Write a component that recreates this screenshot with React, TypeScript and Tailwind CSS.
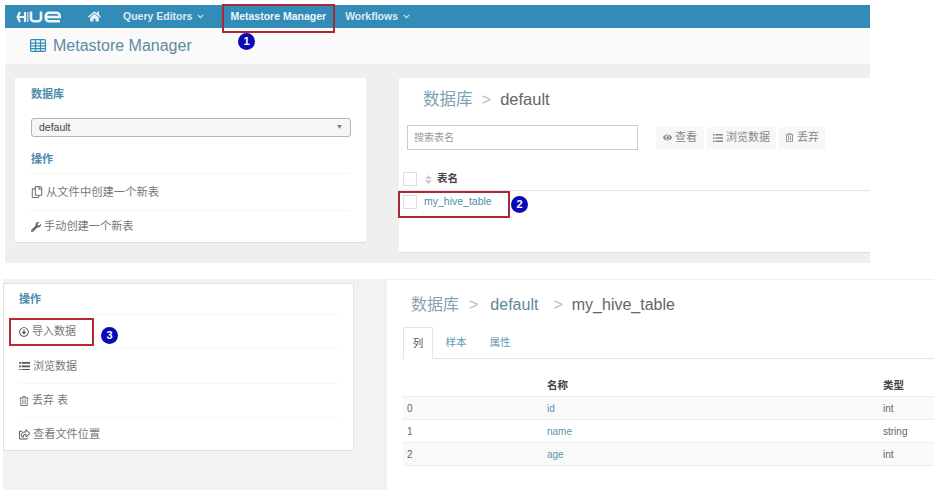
import { FC, ReactNode } from 'react'
import {
  FaChevronDown,
  FaEye,
  FaHome,
  FaRegArrowAltCircleDown,
  FaRegCopy,
  FaRegShareSquare,
  FaRegTrashAlt,
  FaSort,
  FaWrench,
} from 'react-icons/fa'

const Badge: FC<{ n: number; className: string }> = ({ n, className }) => (
  <div
    className={`absolute flex h-[17px] w-[17px] items-center justify-center rounded-full bg-[#0a0ab4] text-[11px] font-bold text-white ${className}`}
  >
    {n}
  </div>
)

const Logo = () => (
  <svg width="45" height="12" viewBox="0 0 45 12" fill="none" stroke="#eef5f9" strokeWidth="2.6">
    <path d="M4 1 1.5 6 4 11M1.5 6H9M9 1v10" strokeWidth="2.2" />
    <path d="M11.8 1v10" stroke="#bcd9e8" strokeWidth="1.4" />
    <path d="M15 .5v6.7a3 3 0 0 0 3 3h4a3 3 0 0 0 3-3V.5" />
    <path d="M44 10.2H33a3.2 3.2 0 0 1-3.2-3.2V5A3.2 3.2 0 0 1 33 1.8h7.5A3.2 3.2 0 0 1 43.7 5v1H30" />
  </svg>
)

const GridIcon = () => (
  <svg width="16" height="13" viewBox="0 0 16 13" fill="none" stroke="#338bb8" strokeWidth="1.2">
    <rect x="0.6" y="0.6" width="14.8" height="11.8" rx="1" />
    <path d="M.6 4.1h14.8M.6 6.9h14.8M.6 9.7h14.8M5.5.6v11.8M10.5.6v11.8" />
  </svg>
)

const ListIcon: FC<{ size: number; color: string }> = ({ size, color }) => (
  <svg width={size} height={size * 0.8} viewBox="0 0 10 8" fill={color}>
    <path d="M0 0h1.6v1.6H0zM2.4 0H10v1.6H2.4zM0 3.2h1.6v1.6H0zM2.4 3.2H10v1.6H2.4zM0 6.4h1.6V8H0zM2.4 6.4H10V8H2.4z" />
  </svg>
)

const NavItem: FC<{ label: string; chevron?: boolean; className?: string }> = ({ label, chevron, className }) => (
  <span className={`flex items-center gap-[5px] text-[10.5px] font-bold whitespace-nowrap text-[#dcebf3] ${className ?? ''}`}>
    {label}
    {chevron && <FaChevronDown className="text-[7px]" />}
  </span>
)

const ActionRow: FC<{ icon: ReactNode; label: string; className?: string }> = ({ icon, label, className }) => (
  <div className={`flex items-center gap-[3px] border-t border-[#f6f6f6] text-[#777] ${className ?? ''}`}>
    {icon}
    <span>{label}</span>
  </div>
)

const ToolButton: FC<{ icon: ReactNode; label: string; className: string }> = ({ icon, label, className }) => (
  <div className={`flex h-[22px] items-center justify-center gap-[3px] bg-[#f7f7f7] text-[11px] text-[#888] ${className}`}>
    {icon}
    <span>{label}</span>
  </div>
)

const columns = [
  { idx: '0', name: 'id', type: 'int', stripe: true },
  { idx: '1', name: 'name', type: 'string', stripe: false },
  { idx: '2', name: 'age', type: 'int', stripe: true },
]

export default function App() {
  return (
    <div
      className="relative h-[503px] w-[945px] overflow-hidden bg-white"
      style={{ fontFamily: '"Liberation Sans", "Noto Sans CJK SC", sans-serif' }}
    >
      <div className="ml-[5px] w-[865px] pt-[5px]">
        <div className="flex h-[23px] items-center bg-[#338bb8] pl-[11px]">
          <Logo />
          <FaHome className="ml-[27px] text-[13px] text-[#e4f0f6]" />
          <NavItem label="Query Editors" chevron className="ml-[22px]" />
          <NavItem label="Metastore Manager" className="ml-[26px] text-[#eef5f9]" />
          <NavItem label="Workflows" chevron className="ml-[19px]" />
        </div>

        <div className="flex h-[36px] items-center gap-[7px] bg-[#fafafa] pb-[1px] pl-[25px] text-[16px] text-[#5f8ba3]">
          <GridIcon />
          Metastore Manager
        </div>

        <div className="flex h-[199px] items-start gap-[33px] bg-[#efefef] pt-[14px] pl-[10px]">
          <div className="h-[165px] w-[351px] border-b border-[#ddd] bg-white px-[16px]">
            <div className="pt-[9px] text-[11px] leading-[14px] font-bold text-[#4d8cab]">数据库</div>
            <div className="mt-[17px] flex h-[19px] w-[320px] items-center justify-between rounded-[3px] border border-[#b5b5b5] bg-[#f6f6f6] pr-[7px] pl-[7px] text-[10.5px] text-[#444]">
              default
              <span className="text-[7px] text-[#777]">▼</span>
            </div>
            <div className="mt-[15px] text-[11px] leading-[14px] font-bold text-[#4d8cab]">操作</div>
            <ActionRow
              icon={<FaRegCopy className="text-[12px]" />}
              label="从文件中创建一个新表"
              className="mt-[7px] h-[37px] text-[11.3px]"
            />
            <ActionRow
              icon={<FaWrench className="text-[10px] text-[#666]" />}
              label="手动创建一个新表"
              className="h-[32px] text-[11.2px]"
            />
          </div>

          <div className="h-[175px] flex-1 border-b border-[#ddd] bg-white">
            <div className="flex h-[47px] items-center pb-[5px] pl-[24px] text-[16.5px] text-[#8c9ea8]">
              <span className="text-[#7f9fb2]">数据库</span>
              <span className="mx-[9px] text-[#bbb]">&gt;</span>
              <span className="text-[#666]">default</span>
            </div>
            <div className="flex items-center pl-[8px]">
              <div className="flex h-[25px] w-[231px] items-center border border-[#ccc] pl-[6px] text-[10px] text-[#999]">
                搜索表名
              </div>
              <ToolButton icon={<FaEye className="text-[9px]" />} label="查看" className="ml-[18px] w-[48px]" />
              <ToolButton icon={<ListIcon size={10} color="#888" />} label="浏览数据" className="ml-[3px] w-[69px]" />
              <ToolButton icon={<FaRegTrashAlt className="text-[9px]" />} label="丢弃" className="ml-[3px] w-[46px]" />
            </div>
            <div className="mt-[16px] flex h-[25px] items-center gap-[6px] border-b border-[#e5e5e5] pt-[2px] pl-[4px]">
              <div className="h-[14px] w-[14px] border border-[#ddd]" />
              <FaSort className="text-[11px] text-[#ccc]" />
              <span className="-ml-[3px] text-[10.5px] font-bold text-[#444]">表名</span>
            </div>
            <div className="flex h-[24px] items-center gap-[7px] pb-[2px] pl-[4px]">
              <div className="h-[14px] w-[14px] border border-[#ddd]" />
              <span className="text-[10.5px] text-[#4b8fa6]">my_hive_table</span>
            </div>
          </div>
        </div>
      </div>

      <div className="mt-[16px] flex h-[211px] pl-[3px]">
        <div className="h-full w-[384px] bg-[#f2f2f2] pt-[4px]">
          <div className="h-[168px] w-[351px] border border-[#e2e2e2] bg-white px-[15px]">
            <div className="pt-[8px] text-[11px] leading-[14px] font-bold text-[#4d8cab]">操作</div>
            <ActionRow
              icon={<FaRegArrowAltCircleDown className="text-[10px] text-[#555]" />}
              label="导入数据"
              className="mt-[8px] h-[34px] text-[11px]"
            />
            <ActionRow icon={<ListIcon size={11} color="#555" />} label="浏览数据" className="h-[35px] text-[11px]" />
            <ActionRow icon={<FaRegTrashAlt className="text-[10px]" />} label="丢弃 表" className="h-[34px] text-[11px]" />
            <ActionRow icon={<FaRegShareSquare className="text-[11px] text-[#555]" />} label="查看文件位置" className="h-[34px] text-[11.2px]" />
          </div>
        </div>

        <div className="w-[547px] border-t border-[#eee] pl-[16px]">
          <div className="flex h-[47px] items-center pt-[2px] pl-[8px] text-[16px]">
            <span className="text-[#86a3b4]">数据库</span>
            <span className="mr-[10px] ml-[10px] text-[#bbb]">&gt;</span>
            <span className="ml-[2px] text-[#5b8a9e]">default</span>
            <span className="mr-[9px] ml-[15px] text-[#bbb]">&gt;</span>
            <span className="text-[#666]">my_hive_table</span>
          </div>
          <div className="flex h-[32px] items-end border-b border-[#e5e5e5] text-[10.5px]">
            <div className="-mb-[1px] flex h-[32px] w-[30px] items-center justify-center border-x border-t border-[#e5e5e5] bg-white text-[#555]">
              列
            </div>
            <div className="flex h-[31px] w-[44px] items-center justify-center pl-[2px] text-[#5d9bb0]">样本</div>
            <div className="flex h-[31px] w-[44px] items-center justify-center pl-[2px] text-[#5d9bb0]">属性</div>
          </div>
          <div className="mt-[15px] grid h-[23px] grid-cols-[144px_336px_1fr] items-center border-b border-[#eee] pt-[2px] text-[10.5px] font-bold text-[#444]">
            <span />
            <span>名称</span>
            <span>类型</span>
          </div>
          {columns.map((col) => (
            <div
              key={col.idx}
              className={`grid h-[23px] grid-cols-[144px_336px_1fr] items-center border-b border-[#eee] pl-[4px] text-[10px] text-[#666] ${col.stripe ? 'bg-[#f9f9f9]' : 'bg-white'}`}
            >
              <span>{col.idx}</span>
              <span className="-ml-[4px] text-[#5d93a8]">{col.name}</span>
              <span className="-ml-[4px]">{col.type}</span>
            </div>
          ))}
        </div>
      </div>

      {/* annotations drawn over the screenshots */}
      <div className="absolute top-[4px] left-[222px] h-[29px] w-[113px] border-2 border-[#a92a35]" />
      <Badge n={1} className="top-[33px] left-[238px]" />
      <div className="absolute top-[191px] left-[398px] h-[27px] w-[112px] border-2 border-[#a92a35]" />
      <Badge n={2} className="top-[196px] left-[511px]" />
      <div className="absolute top-[318px] left-[9px] h-[28px] w-[85px] border-2 border-[#b8282c]" />
      <Badge n={3} className="top-[327px] left-[101px]" />
    </div>
  )
}
